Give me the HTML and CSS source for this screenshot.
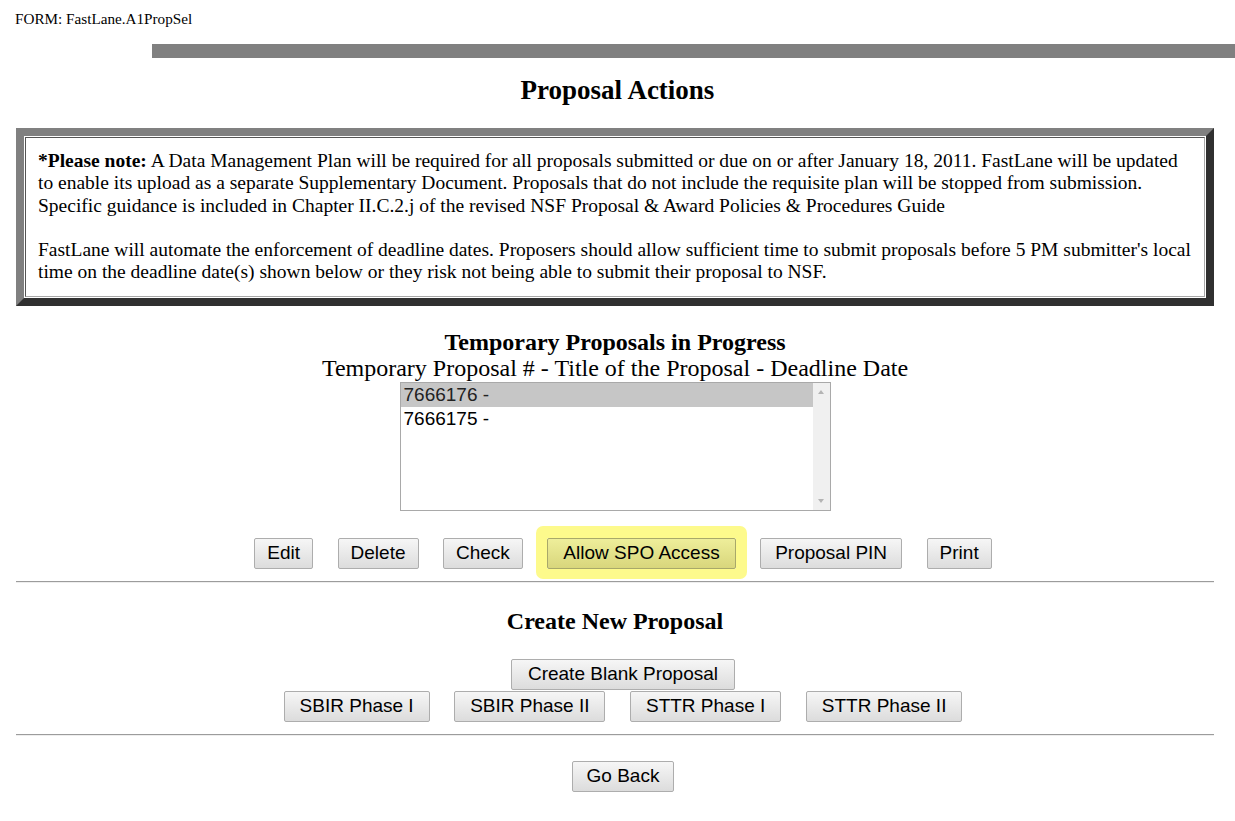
FILE: index.html
```html
<!DOCTYPE html>
<html>
<head>
<meta charset="utf-8">
<title>FastLane - Proposal Actions</title>
<link rel="stylesheet" href="styles.css">
</head>
<body>
<div class="formid">FORM: FastLane.A1PropSel</div>
<div class="bar"></div>
<h1 class="title">Proposal Actions</h1>
<div class="notice">
  <div class="notice-cell">
    <p><b>*Please note:</b> A Data Management Plan will be required for all proposals submitted or due on or after January 18, 2011. FastLane will be updated to enable its upload as a separate Supplementary Document. Proposals that do not include the requisite plan will be stopped from submission. Specific guidance is included in Chapter II.C.2.j of the revised NSF Proposal &amp; Award Policies &amp; Procedures Guide</p>
    <p>FastLane will automate the enforcement of deadline dates. Proposers should allow sufficient time to submit proposals before 5 PM submitter's local time on the deadline date(s) shown below or they risk not being able to submit their proposal to NSF.</p>
  </div>
</div>

<div class="temp">
  <div class="sub-title">Temporary Proposals in Progress</div>
  <div class="sub-caption">Temporary Proposal # - Title of the Proposal - Deadline Date</div>
  <div class="listbox">
    <div class="options">
      <div class="option selected">7666176 -</div>
      <div class="option">7666175 -</div>
    </div>
    <div class="scrollbar">
      <span class="arrow up"></span>
      <span class="arrow down"></span>
    </div>
  </div>
</div>

<div class="btn-row actions">
  <button class="btn">Edit</button>
  <button class="btn">Delete</button>
  <button class="btn">Check</button>
  <button class="btn highlight">Allow SPO Access</button>
  <button class="btn wide">Proposal PIN</button>
  <button class="btn">Print</button>
</div>
<hr class="rule">
<h2 class="section-title">Create New Proposal</h2>
<div class="btn-row create">
  <button class="btn">Create Blank Proposal</button>
</div>
<div class="btn-row phases">
  <button class="btn">SBIR Phase I</button>
  <button class="btn">SBIR Phase II</button>
  <button class="btn">STTR Phase I</button>
  <button class="btn">STTR Phase II</button>
</div>
<hr class="rule">
<div class="btn-row back">
  <button class="btn">Go Back</button>
</div>
</body>
</html>
```
FILE: styles.css
```css
html, body {
  margin: 0;
  padding: 0;
  background: #ffffff;
  color: #000000;
  font-family: "Liberation Serif", "Times New Roman", serif;
}
body {
  width: 1235px;
}
.formid {
  font-size: 15.2px;
  line-height: 17px;
  padding: 10px 0 0 15px;
}
.bar {
  margin: 17px 0 0 152px;
  height: 14px;
  background: #808080;
}
.title {
  margin: 18px 0 0 0;
  text-align: center;
  font-size: 27px;
  line-height: 28px;
  font-weight: bold;
}
.notice {
  margin: 24px 21px 0 16px;
  border-style: solid;
  border-width: 8px;
  border-color: #808080 #303030 #303030 #808080;
  padding: 1px;
}
.notice-cell {
  border-style: solid;
  border-width: 1px;
  border-color: #555555 #a8a8a8 #a8a8a8 #555555;
  padding: 12px 12px 12px 12px;
  font-size: 19.5px;
  line-height: 22.3px;
}
.notice-cell p {
  margin: 0;
}
.notice-cell p + p {
  margin-top: 22.3px;
}
.temp {
  margin-top: 23px;
  display: flex;
  flex-direction: column;
  align-items: center;
  padding-left: 16px;
  width: 1198px;
}
.sub-title {
  font-size: 24px;
  font-weight: bold;
  line-height: 26px;
}
.sub-caption {
  font-size: 24px;
  line-height: 27px;
}
.listbox {
  width: 429px;
  height: 127px;
  border: 1px solid #a9a9a9;
  display: flex;
  background: #fff;
}
.options {
  flex: 1;
  font-family: "Liberation Sans", Arial, sans-serif;
  font-size: 19px;
  line-height: 24.5px;
}
.option {
  padding-left: 3px;
}
.option.selected {
  background: #c6c6c6;
  color: #222;
}
.scrollbar {
  width: 17px;
  background: #f0f0f0;
  position: relative;
}
.arrow {
  position: absolute;
  left: 5px;
  width: 0;
  height: 0;
  border-left: 3.5px solid transparent;
  border-right: 3.5px solid transparent;
}
.arrow.up {
  top: 7px;
  border-bottom: 4px solid #b4b4b4;
}
.arrow.down {
  bottom: 7px;
  border-top: 4px solid #b4b4b4;
}
.btn-row {
  display: flex;
  justify-content: center;
  gap: 24.5px;
  padding-left: 16px;
  width: 1214px;
}
.btn {
  font-family: "Liberation Sans", Arial, sans-serif;
  font-size: 19px;
  height: 31px;
  padding: 0 12px;
  margin: 0;
  border: 1px solid #adadad;
  border-radius: 2px;
  background: linear-gradient(#f6f6f6, #dcdcdc);
  color: #000;
}
.btn.highlight {
  padding: 0 15px;
  box-shadow: 0 -1px 0 11px #fdfa8c;
  background: linear-gradient(#eeee9a, #d8d67c);
  border-color: #a8a86a;
}
.btn.wide {
  padding: 0 14px;
}
.actions {
  margin-top: 27px;
}
.rule {
  margin: 12px 21px 0 16px;
  border: 0;
  border-top: 1px solid #9c9c9c;
  border-bottom: 1px solid #eeeeee;
  height: 0;
}
.section-title {
  margin: 25px 0 0 0;
  padding-left: 16px;
  width: 1198px;
  text-align: center;
  font-size: 24px;
  line-height: 26px;
  font-weight: bold;
}
.create {
  margin-top: 25px;
}
.create .btn {
  padding: 0 16px;
}
.phases {
  margin-top: 1px;
}
.phases .btn {
  padding: 0 15px;
}
.back {
  margin-top: 25px;
}
.back .btn {
  padding: 0 13.5px;
}
```
